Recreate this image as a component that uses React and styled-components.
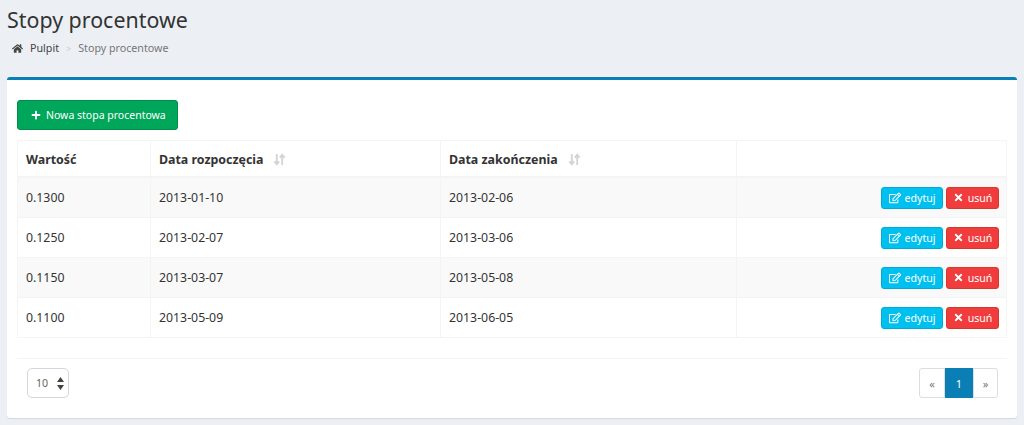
import React from "react";
import styled, { createGlobalStyle } from "styled-components";
import { FaHome, FaPlus, FaRegEdit, FaTimes } from "react-icons/fa";

const Global = createGlobalStyle`
  html, body { margin: 0; padding: 0; background: #ecf0f5; }
  body { font-family: "Noto Sans", sans-serif; font-size: 13px; color: #333; height: 425px; overflow: hidden; }
  * { box-sizing: border-box; }
`;
const Header = styled.header`padding: 6px 7px 0; height: 77px;`;
const Title = styled.h1`margin: 0; font-size: 21.4px; line-height: 27px; font-weight: 400; color: #333;`;
const Crumbs = styled.div`display: flex; align-items: center; margin: 8px 0 0 5px; height: 14px; font-size: 10.7px; color: #777;`;
const Crumb = styled.span`color: #444; margin-left: 7px;`;
const Sep = styled.span`color: #ccc; margin: 0 7px; font-size: 9px;`;
const Box = styled.main`margin: 0 7px; height: 341px; background: #fff; border-top: 3px solid #0a7fb5; border-radius: 3px; box-shadow: 0 1px 1px rgba(0,0,0,.1); padding: 20px 10px 0;`;
const AddButton = styled.button`display: flex; align-items: center; gap: 5px; width: 161px; height: 30px; padding: 0 0 0 13px; font: inherit; font-size: 10.5px; color: #fff; background: #00a65a; border: 1px solid #008d4c; border-radius: 3px;`;
const Table = styled.div`margin-top: 10px; width: 990px; border: 1px solid #f4f4f4;`;
const Row = styled.div`display: grid; grid-template-columns: 133px 290px 296px 1fr; height: ${p => p.$head ? "37px" : "40px"}; background: ${p => p.$odd ? "#f9f9f9" : "#fff"}; border-bottom: ${p => p.$head ? "2px" : "1px"} solid #f4f4f4; &:last-child { border-bottom: 0; height: 39px; }`;
const Cell = styled.div`display: flex; align-items: center; padding: ${p => p.$head ? "1px 8px 0" : "0 8px"}; font-size: ${p => p.$head ? "12.4px" : "12.3px"}; font-weight: ${p => p.$head ? 700 : 400}; border-right: 1px solid #f4f4f4; color: #333; &:last-child { border-right: 0; justify-content: flex-end; gap: 3px; padding-right: 7px; }`;
const SortIcon = styled.svg`width: 13px; height: 13px; margin-left: 10px; color: #d4d4d4;`;
const Action = styled.button`display: flex; align-items: center; justify-content: center; gap: 4px; height: 22px; width: ${p => p.$w}px; padding: 0; font: inherit; font-size: 10.6px; color: #fff; background: ${p => p.$bg}; border: 1px solid ${p => p.$bd}; border-radius: 3px;`;
const Footer = styled.div`display: flex; justify-content: space-between; margin-top: 20px; border-top: 1px solid #f4f4f4; padding: 9px 9px 0 10px; width: 990px;`;
const Select = styled.div`display: flex; align-items: center; justify-content: space-between; width: 42px; height: 30px; border: 1px solid #d2d6de; border-radius: 5px; padding: 0 4px 0 8px; font-size: 10.6px; color: #666;`;
const Pager = styled.div`display: flex; height: 30px;`;
const Page = styled.div`display: flex; align-items: center; justify-content: center; width: ${p => p.$w}px; font-size: 11px; color: ${p => p.$on ? "#fff" : "#777"}; background: ${p => p.$on ? "#0a7fb5" : "#fff"}; border: 1px solid ${p => p.$on ? "#0a7fb5" : "#ddd"}; border-radius: ${p => p.$r || 0};`;

const Sort = () => (
  <SortIcon viewBox="0 0 12 12" fill="none" stroke="currentColor" strokeWidth="1.7">
    <path d="M3.5 1v9M1.3 7.8 3.5 10.5 5.7 7.8M8.5 11V2M6.3 4.2 8.5 1.5l2.2 2.7" />
  </SortIcon>
);
const rows = [
  ["0.1300", "2013-01-10", "2013-02-06"],
  ["0.1250", "2013-02-07", "2013-03-06"],
  ["0.1150", "2013-03-07", "2013-05-08"],
  ["0.1100", "2013-05-09", "2013-06-05"],
];
export default function App() {
  return (
    <>
      <Global />
      <Header>
        <Title>Stopy procentowe</Title>
        <Crumbs><FaHome size={11} color="#444" /><Crumb>Pulpit</Crumb><Sep>&gt;</Sep>Stopy procentowe</Crumbs>
      </Header>
      <Box>
        <AddButton><FaPlus size={10} />Nowa stopa procentowa</AddButton>
        <Table>
          <Row $head>
            <Cell $head>Wartość</Cell>
            <Cell $head>Data rozpoczęcia<Sort /></Cell>
            <Cell $head>Data zakończenia<Sort /></Cell>
            <Cell />
          </Row>
          {rows.map((r, i) => (
            <Row key={r[0]} $odd={i % 2 === 0}>
              {r.map(v => <Cell key={v}>{v}</Cell>)}
              <Cell>
                <Action $w={62} $bg="#00c0ef" $bd="#00acd6"><FaRegEdit size={12} />edytuj</Action>
                <Action $w={53} $bg="#f03c3c" $bd="#d73925"><FaTimes size={11} />usuń</Action>
              </Cell>
            </Row>
          ))}
        </Table>
        <Footer>
          <Select>10<svg width="7" height="13" viewBox="0 0 7 13" fill="#444"><path d="M3.5 0 7 5H0zM0 8h7l-3.5 5z" /></svg></Select>
          <Pager>
            <Page $w={26} $r="3px 0 0 3px">«</Page>
            <Page $w={28} $on>1</Page>
            <Page $w={25} $r="0 3px 3px 0">»</Page>
          </Pager>
        </Footer>
      </Box>
    </>
  );
}
